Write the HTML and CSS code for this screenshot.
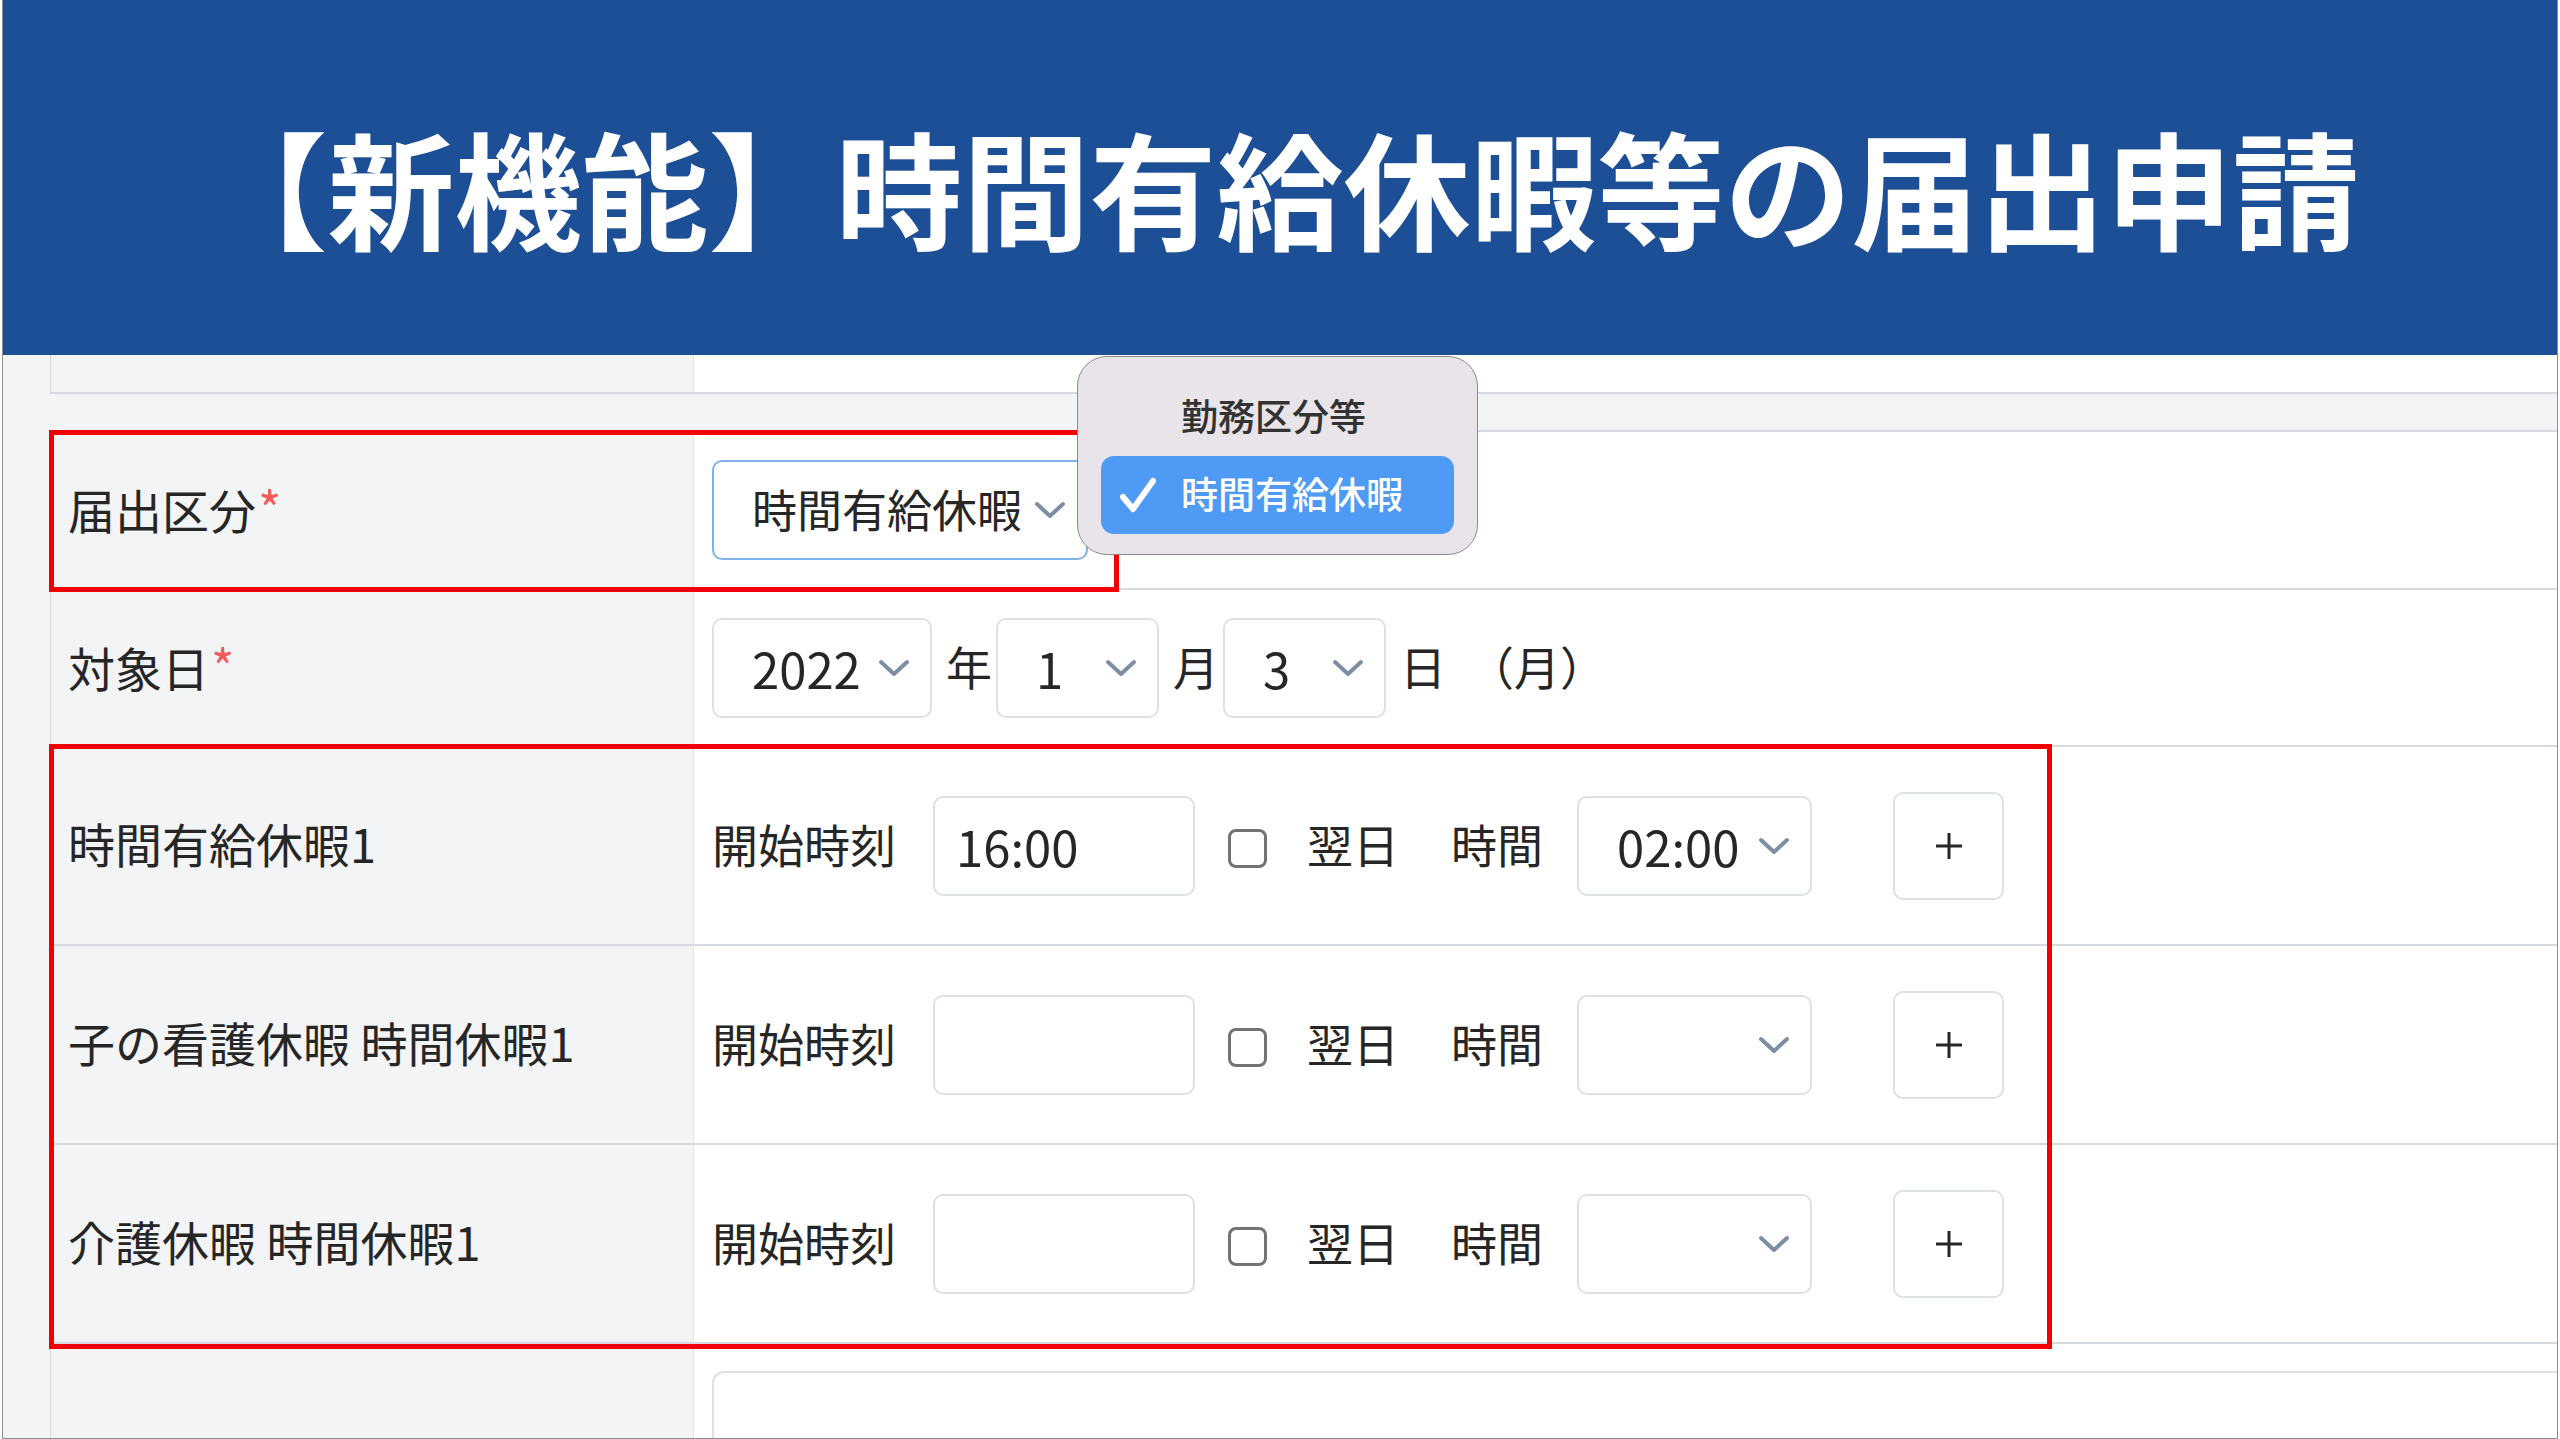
FILE: index.html
```html
<!DOCTYPE html>
<html lang="ja">
<head>
  <meta charset="UTF-8">
  <meta name="viewport" content="width=device-width, initial-scale=1">
  <title>時間有給休暇等の届出申請</title>
  <link rel="stylesheet" href="styles.css">
</head>
<body>

  <div class="frame">
    <div class="banner">
      <h1>【新機能】時間有給休暇等の届出申請</h1>
    </div>

    <div class="main">
      <div class="table">
        <div class="row row-cut">
          <div class="label"></div>
          <div class="field"></div>
        </div>
      </div>

      <div class="table table-form">
        <div class="row row-kind">
          <div class="label"><span class="text">届出区分<span class="req">*</span></span></div>
          <div class="field">
            <div class="select-wrap">
              <div class="select select-kind">
                <span>時間有給休暇</span>
                <svg class="chev" viewBox="0 0 32 18"><path d="M3 3 L16 15 L29 3"/></svg>
              </div>
              <div class="popup">
                <div class="popup-title">勤務区分等</div>
                <div class="popup-item">
                  <svg class="tick" viewBox="0 0 38 38"><path d="M4 21 L14 33 L34 5"/></svg>
                  <span>時間有給休暇</span>
                </div>
              </div>
            </div>
          </div>
        </div>

        <div class="row row-date">
          <div class="label"><span class="text">対象日<span class="req">*</span></span></div>
          <div class="field">
            <div class="select select-year">
              <span class="num">2022</span>
              <svg class="chev" viewBox="0 0 32 18"><path d="M3 3 L16 15 L29 3"/></svg>
            </div>
            <span class="text unit">年</span>
            <div class="select select-md">
              <span class="num">1</span>
              <svg class="chev" viewBox="0 0 32 18"><path d="M3 3 L16 15 L29 3"/></svg>
            </div>
            <span class="text unit">月</span>
            <div class="select select-md">
              <span class="num">3</span>
              <svg class="chev" viewBox="0 0 32 18"><path d="M3 3 L16 15 L29 3"/></svg>
            </div>
            <span class="text unit">日</span>
            <span class="text weekday">（月）</span>
          </div>
        </div>

        <div class="row row-hours">
          <div class="label"><span class="text">時間有給休暇1</span></div>
          <div class="field">
            <span class="text">開始時刻</span>
            <input class="time-input" type="text" value="16:00">
            <span class="check"></span>
            <span class="text next-day">翌日</span>
            <span class="text caption-dur">時間</span>
            <div class="select select-dur">
              <span class="num">02:00</span>
              <svg class="chev" viewBox="0 0 32 18"><path d="M3 3 L16 15 L29 3"/></svg>
            </div>
            <button class="add" type="button">
              <svg viewBox="0 0 30 30"><path d="M15 2 V28 M2 15 H28"/></svg>
            </button>
          </div>
        </div>

        <div class="row row-hours">
          <div class="label"><span class="text">子の看護休暇 時間休暇1</span></div>
          <div class="field">
            <span class="text">開始時刻</span>
            <input class="time-input" type="text" value="">
            <span class="check"></span>
            <span class="text next-day">翌日</span>
            <span class="text caption-dur">時間</span>
            <div class="select select-dur">
              <svg class="chev" viewBox="0 0 32 18"><path d="M3 3 L16 15 L29 3"/></svg>
            </div>
            <button class="add" type="button">
              <svg viewBox="0 0 30 30"><path d="M15 2 V28 M2 15 H28"/></svg>
            </button>
          </div>
        </div>

        <div class="row row-hours">
          <div class="label"><span class="text">介護休暇 時間休暇1</span></div>
          <div class="field">
            <span class="text">開始時刻</span>
            <input class="time-input" type="text" value="">
            <span class="check"></span>
            <span class="text next-day">翌日</span>
            <span class="text caption-dur">時間</span>
            <div class="select select-dur">
              <svg class="chev" viewBox="0 0 32 18"><path d="M3 3 L16 15 L29 3"/></svg>
            </div>
            <button class="add" type="button">
              <svg viewBox="0 0 30 30"><path d="M15 2 V28 M2 15 H28"/></svg>
            </button>
          </div>
        </div>

        <div class="row row-note">
          <div class="label"></div>
          <div class="field">
            <div class="note-box"></div>
          </div>
        </div>

        <!-- red annotation boxes -->
        <div class="mark mark-kind"></div>
        <div class="mark mark-hours"></div>
      </div>
    </div>
  </div>

</body>
</html>
```

FILE: styles.css
```css
* {
  margin: 0;
  padding: 0;
  box-sizing: border-box;
}

body {
  background: #fff;
  font-family: "Noto Sans CJK JP", "Noto Sans", sans-serif;
  color: #262626;
}

.frame {
  margin: 0 2px;
  height: 1439px;
  border: 1px solid #8e8e8e;
  border-top: none;
  background: #f3f4f6;
  overflow: hidden;
}

.banner {
  height: 355px;
  background: #1d4f96;
  display: flex;
  align-items: center;
  justify-content: center;
  padding-top: 18px;
}

.banner h1 {
  color: #fff;
  font-size: 127px;
  font-weight: 700;
  line-height: 1;
  white-space: nowrap;
}

.main {
  padding-left: 47px;
}

.table {
  background: #fff;
  border-left: 1px solid #d3d8de;
}

.table-form {
  position: relative;
  margin-top: 36px;
  border-top: 2px solid #d6dae0;
}

.row {
  display: grid;
  grid-template-columns: 643px 1fr;
  border-bottom: 2px solid #d6dae0;
}

.label {
  background: #f3f4f6;
  border-right: 1px solid #e0e3e8;
  padding-left: 17px;
  display: flex;
  align-items: center;
  font-size: 47px;
  white-space: nowrap;
}

/* CJK glyphs sit a little low in the line box */
.text {
  margin-bottom: 6px;
}

.req {
  color: #f25b5b;
  font-size: 50px;
  margin-left: 2px;
}

.field {
  display: flex;
  align-items: center;
  padding-left: 18px;
  font-size: 46px;
  white-space: nowrap;
}

.row-cut { height: 39px; }
.row-kind { height: 158px; }
.row-date { height: 157px; }
.row-hours { height: 199px; }
.row-hours:first-of-type { height: 198px; }

.row-note {
  height: 200px;
  border-bottom: none;
}

.row-note .field {
  align-items: flex-start;
  padding-top: 27px;
}

.note-box {
  flex: 1;
  height: 200px;
  margin-right: -20px;
  border: 2px solid #dde1e6;
  border-radius: 12px;
}

/* select boxes */
.select-wrap {
  position: relative;
}

.select {
  display: flex;
  align-items: center;
  height: 100px;
  padding: 0 20px 0 38px;
  border: 2px solid #dde1e6;
  border-radius: 10px;
  background: #fff;
}

.select .chev {
  width: 32px;
  height: 18px;
  margin-left: auto;
  fill: none;
  stroke: #7d8ea2;
  stroke-width: 4;
  stroke-linecap: round;
  stroke-linejoin: round;
}

.num {
  font-size: 49px;
}

.select-kind {
  width: 376px;
  font-size: 45px;
  border-color: #7fb1ea;
}

.select-kind span {
  margin-bottom: 4px;
}

.select-year { width: 220px; }
.select-md { width: 163px; }
.select-dur { width: 235px; }

.unit {
  margin-left: 14px;
  margin-right: 4px;
}

.weekday {
  margin-left: 18px;
}

/* time rows */
.time-input {
  width: 262px;
  height: 100px;
  margin-left: 37px;
  padding-left: 21px;
  border: 2px solid #dde1e6;
  border-radius: 10px;
  font-family: inherit;
  font-size: 49px;
  color: #262626;
  background: #fff;
  outline: none;
}

.check {
  width: 39px;
  height: 39px;
  margin: 6px 0 0 33px;
  border: 3px solid #737373;
  border-radius: 8px;
  background: #fff;
}

.next-day {
  margin-left: 40px;
}

.caption-dur {
  margin-left: 52px;
  margin-right: 34px;
}

.add {
  width: 111px;
  height: 108px;
  margin-left: 81px;
  border: 2px solid #dde1e6;
  border-radius: 10px;
  background: #fff;
  display: flex;
  align-items: center;
  justify-content: center;
}

.add svg {
  width: 30px;
  height: 30px;
  fill: none;
  stroke: #262626;
  stroke-width: 3;
}

/* open dropdown */
.popup {
  position: absolute;
  left: 365px;
  top: -104px;
  width: 401px;
  height: 199px;
  padding: 36px 23px 0;
  background: #e8e4e9;
  border: 1.5px solid #8b8b8b;
  border-radius: 30px;
  z-index: 3;
}

.popup-title {
  font-size: 37px;
  font-weight: 500;
  line-height: 44px;
  padding-left: 80px;
  color: #333;
}

.popup-item {
  margin-top: 19px;
  height: 78px;
  padding-left: 18px;
  display: flex;
  align-items: center;
  background: #4e9af4;
  border-radius: 13px;
  color: #fff;
  font-size: 37px;
  font-weight: 500;
}

.popup-item span {
  margin-bottom: 4px;
}

.tick {
  width: 38px;
  height: 38px;
  margin-right: 24px;
  fill: none;
  stroke: #fff;
  stroke-width: 6;
  stroke-linecap: round;
  stroke-linejoin: round;
}

/* red annotation boxes */
.mark {
  position: absolute;
  left: -2px;
  border: 5px solid #f20000;
  z-index: 2;
}

.mark-kind {
  top: -2px;
  width: 1070px;
  height: 162px;
}

.mark-hours {
  top: 312px;
  width: 2003px;
  height: 605px;
}
```
